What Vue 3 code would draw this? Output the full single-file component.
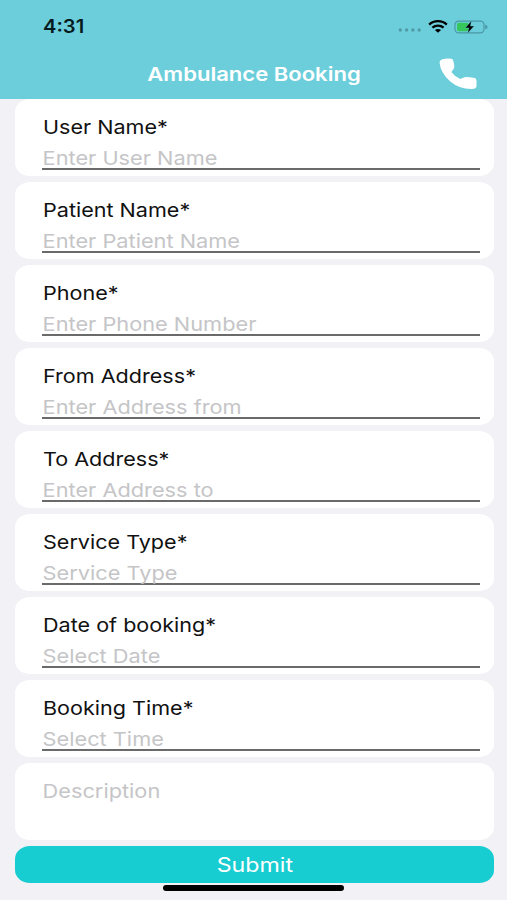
<template>
  <div class="screen">
    <header class="header">
      <div class="status-bar">
        <span class="clock"><span class="wide">4:31</span></span>
        <div class="status-icons">
          <svg class="signal" width="24" height="4" viewBox="0 0 24 4">
            <circle v-for="n in 4" :key="n" :cx="n * 6.3 - 4" cy="2" r="1.7" />
          </svg>
          <svg class="wifi" width="20" height="13" viewBox="0 0 20 13">
            <path d="M1.2 4.6C6 0 14 0 18.8 4.6" />
            <path d="M4.4 7.7C7.6 4.8 12.4 4.8 15.6 7.7" />
            <path class="wifi-base" d="M6.9 10.1Q10 7.8 13.1 10.1L10 12.8Z" />
          </svg>
          <svg class="battery" width="34" height="14" viewBox="0 0 34 14">
            <rect class="shell" x="1" y="1.1" width="29" height="11.8" rx="3.6" />
            <path class="tip" d="M31.2 4.8Q33.6 5.2 33.6 7Q33.6 8.8 31.2 9.2Z" />
            <rect class="charge" x="3" y="2.8" width="11.5" height="8.4" rx="1.8" />
            <path class="bolt" d="M17.4 .8L11.2 7.9H14.8L13.6 13.2L20.2 6.1H16.5Z" />
          </svg>
        </div>
      </div>
      <div class="nav-bar">
        <h1 class="title"><span class="wide">Ambulance Booking</span></h1>
        <button class="call-btn" type="button" aria-label="Call">
          <svg width="38" height="32" viewBox="0 0 38 32">
            <path d="M3.4 1.3Q8 .2 12.3 .8Q14.2 1.2 14.4 3.2L15.3 7.6Q15.6 9.8 14.2 11.4L12.4 14Q15.6 18.6 21.4 21L24.2 19.8Q26 18.8 28 19.1L34.8 19.8Q37.3 20.2 37.5 22.2V28.4Q37.2 30.3 35 30.8Q21 31.8 11 23.2Q1.6 15.2 .5 4.6Q.6 2 3.4 1.3Z" />
          </svg>
        </button>
      </div>
    </header>

    <form class="form" @submit.prevent>
      <div v-for="field in fields" :key="field.key" class="card">
        <label class="label" :for="field.key">{{ field.label }}</label>
        <div class="input-row">
          <input :id="field.key" v-model="form[field.key]" class="input" :placeholder="field.placeholder" />
        </div>
      </div>

      <div class="card">
        <textarea v-model="form.description" class="textarea" placeholder="Description"></textarea>
      </div>

      <button class="submit-btn" type="submit"><span class="wide">Submit</span></button>
    </form>

    <div class="home-indicator"></div>
  </div>
</template>

<script setup>
import { reactive } from 'vue';

const fields = [
  { key: 'userName', label: 'User Name*', placeholder: 'Enter User Name' },
  { key: 'patientName', label: 'Patient Name*', placeholder: 'Enter Patient Name' },
  { key: 'phone', label: 'Phone*', placeholder: 'Enter Phone Number' },
  { key: 'fromAddress', label: 'From Address*', placeholder: 'Enter Address from' },
  { key: 'toAddress', label: 'To Address*', placeholder: 'Enter Address to' },
  { key: 'serviceType', label: 'Service Type*', placeholder: 'Service Type' },
  { key: 'date', label: 'Date of booking*', placeholder: 'Select Date' },
  { key: 'time', label: 'Booking Time*', placeholder: 'Select Time' },
];

const form = reactive({
  userName: '',
  patientName: '',
  phone: '',
  fromAddress: '',
  toAddress: '',
  serviceType: '',
  date: '',
  time: '',
  description: '',
});
</script>

<style>
body {
  margin: 0;
  background: #f1f1f6;
}
</style>

<style scoped>
.screen {
  display: flex;
  flex-direction: column;
  height: 900px;
  overflow: hidden;
  background: #f1f1f6;
  font-family: Inter, "Liberation Sans", sans-serif;
}

.wide {
  display: inline-block;
  transform: scaleX(1.16);
}

.header {
  height: 99px;
  flex: none;
  background: #6ccedb;
}

.status-bar {
  display: flex;
  justify-content: space-between;
  align-items: center;
  height: 53px;
  padding: 0 19px 0 43px;
  box-sizing: border-box;
}

.clock {
  font-size: 18px;
  font-weight: 600;
  color: #071a1e;
}

.clock .wide {
  transform: scaleX(1.12);
  transform-origin: left;
}

.status-icons {
  display: flex;
  align-items: center;
}

.signal {
  margin: 7px 6px 0 0;
  fill: #4f9ba6;
}

.wifi {
  margin-right: 6px;
  fill: none;
  stroke: #000;
  stroke-width: 2.3;
}

.wifi-base {
  fill: #000;
  stroke: none;
}

.shell {
  fill: none;
  stroke: #4a98a5;
  stroke-width: 1.2;
}

.tip {
  fill: #4a98a5;
}

.charge {
  fill: #35c759;
}

.bolt {
  fill: #000;
  stroke: #6ccedb;
  stroke-width: 0.4;
}

.nav-bar {
  display: grid;
  grid-template-columns: 80px 1fr 80px;
  align-items: center;
  height: 42px;
}

.title {
  grid-column: 2;
  margin: 0;
  text-align: center;
  font-size: 19px;
  font-weight: 600;
  color: #fff;
}

.call-btn {
  display: flex;
  padding: 0;
  margin-left: 12px;
  border: none;
  background: none;
  fill: #fff;
}

.form {
  display: flex;
  flex-direction: column;
  gap: 6px;
  padding: 0 13px 0 15px;
}

.card {
  height: 77px;
  box-sizing: border-box;
  padding: 17px 14px 0 27px;
  border-radius: 15px / 13px;
  background: #fff;
}

.label {
  display: block;
  width: max-content;
  margin-left: 0.5px;
  font-size: 19px;
  line-height: 24px;
  color: #111;
  transform: scaleX(1.135);
  transform-origin: left;
}

.input-row {
  display: flex;
  align-items: flex-end;
  height: 30px;
  box-sizing: border-box;
  border-bottom: 2px solid #6a6a6a;
}

.input,
.textarea {
  display: block;
  width: 86%;
  box-sizing: border-box;
  padding: 0 0 0 0.5px;
  border: none;
  outline: none;
  background: transparent;
  font-family: inherit;
  font-size: 19px;
  color: #111;
  transform: scaleX(1.145);
  transform-origin: left;
}

.input {
  height: 23px;
  margin-bottom: -2px;
}

.textarea {
  height: 50px;
  line-height: 24px;
  resize: none;
}

.input::placeholder,
.textarea::placeholder {
  color: #c5c5c7;
  opacity: 1;
}

.submit-btn {
  height: 37px;
  padding: 0;
  border: none;
  border-radius: 15px / 13px;
  background: #18cdd1;
  color: #fff;
  font-family: inherit;
  font-size: 20px;
}

.home-indicator {
  width: 181px;
  height: 6px;
  margin: 2px auto 0;
  border-radius: 3px;
  background: #000;
}
</style>
